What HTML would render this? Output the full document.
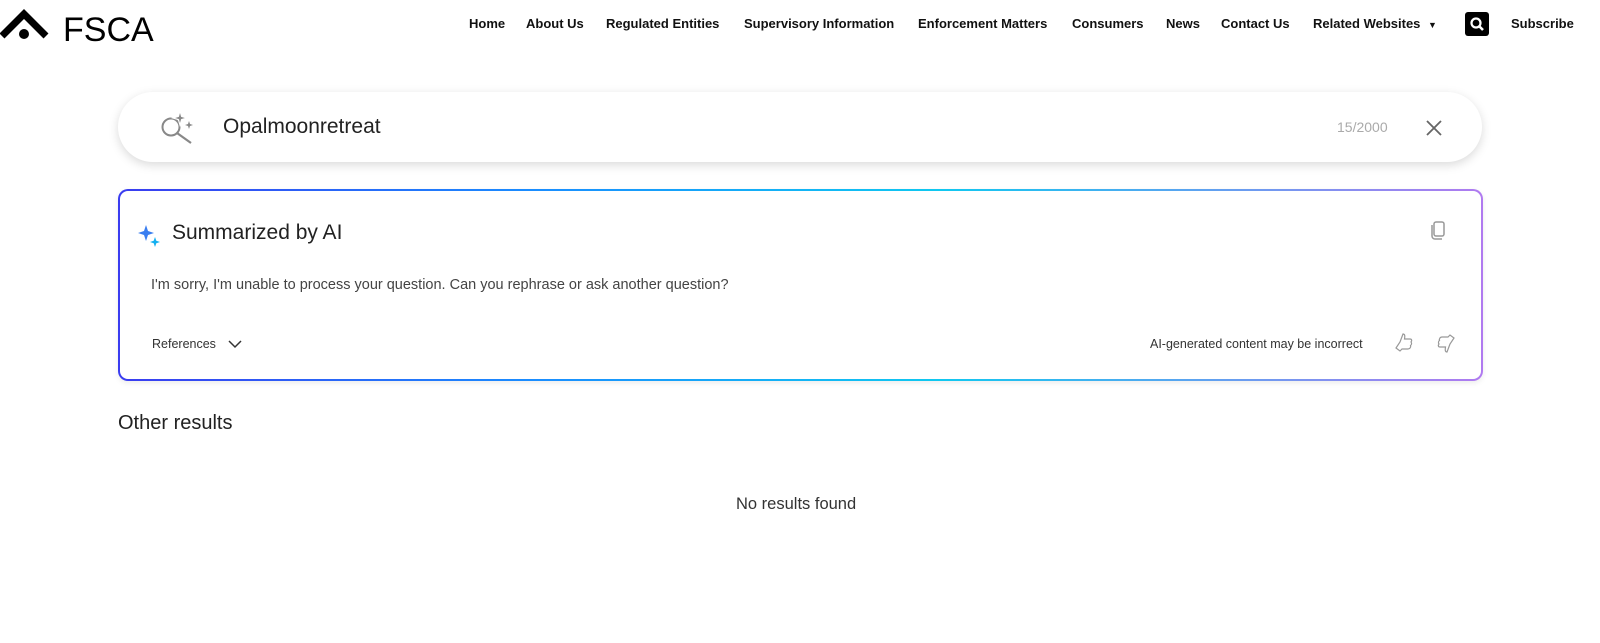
<!DOCTYPE html>
<html><head><meta charset="utf-8"><style>
*{box-sizing:border-box;margin:0;padding:0}
body{width:1600px;height:643px;background:#fff;font-family:"Liberation Sans",sans-serif;position:relative;overflow:hidden;color:#222}
.logo{position:absolute;left:0;top:6px}
.nav{position:absolute;top:16px;left:469px;font-size:13px;font-weight:700;color:#111;white-space:nowrap}
.nav span{position:absolute;top:0}
.sbtn{position:absolute;left:1465px;top:12px;width:24px;height:24px;background:#000;border-radius:3px}
.search{position:absolute;left:118px;top:92px;width:1364px;height:70px;border-radius:35px;background:#fff;box-shadow:0 3px 10px rgba(0,0,0,.15)}
.search .q{position:absolute;left:105px;top:23px;font-size:21px;color:#222}
.search .cnt{position:absolute;left:1219px;top:27px;font-size:14px;color:#aaa}
.card{position:absolute;left:118px;top:189px;width:1365px;height:192px;border-radius:10px;padding:2px;background:linear-gradient(90deg,#3a3cf0 0%,#1a8cff 30%,#10c8f0 60%,#b07af0 100%);box-shadow:0 2px 6px rgba(0,0,0,.08)}
.card .in{width:100%;height:100%;background:#fff;border-radius:8px;position:relative}
.ttl{position:absolute;left:52px;top:30px;font-size:21px;color:#222}
.msg{position:absolute;left:31px;top:86px;font-size:14.5px;color:#444}
.ref{position:absolute;left:32px;top:146px;font-size:12.5px;color:#333}
.dis{position:absolute;left:1030px;top:146px;font-size:12.5px;color:#333}
.other{position:absolute;left:118px;top:412px;font-size:20px;color:#222}
.none{position:absolute;left:736px;top:495px;font-size:16.5px;color:#333}
</style></head><body>
<svg class="logo" width="165" height="38" viewBox="0 0 165 38">
<path d="M2 30 L24 8 L46 30" fill="none" stroke="#000" stroke-width="7"/>
<circle cx="24" cy="28" r="5" fill="#000"/>
<text x="63" y="35" font-family="Liberation Sans" font-size="34" fill="#000">FSCA</text>
</svg>
<div class="nav">
<span style="left:0">Home</span><span style="left:57px">About Us</span><span style="left:137px">Regulated Entities</span><span style="left:275px">Supervisory Information</span><span style="left:449px">Enforcement Matters</span><span style="left:603px">Consumers</span><span style="left:697px">News</span><span style="left:752px">Contact Us</span><span style="left:844px">Related Websites <span style="position:static;font-size:9px;margin-left:4px">▼</span></span><span style="left:1042px">Subscribe</span>
</div>
<div class="sbtn"><svg width="24" height="24"><circle cx="11" cy="11" r="4.5" fill="none" stroke="#fff" stroke-width="2.2"/><path d="M14 14 L18 18" stroke="#fff" stroke-width="2.6"/></svg></div>
<div class="search">
<svg style="position:absolute;left:40px;top:16px" width="40" height="40" viewBox="0 0 40 40"><circle cx="13" cy="19" r="8.5" fill="none" stroke="#888" stroke-width="2"/><path d="M19 25 L33 35" stroke="#888" stroke-width="2.2"/><path d="M22 3 L23.6 8.4 L29 10 L23.6 11.6 L22 17 L20.4 11.6 L15 10 L20.4 8.4Z" fill="#888" stroke="#fff" stroke-width="1.2"/><path d="M31 13 L32 16 L35 17 L32 18 L31 21 L30 18 L27 17 L30 16Z" fill="#888"/></svg>
<div class="q">Opalmoonretreat</div>
<div class="cnt">15/2000</div>
<svg style="position:absolute;left:1306px;top:26px" width="20" height="20"><path d="M3 3L17 17M17 3L3 17" stroke="#666" stroke-width="1.8"/></svg>
</div>
<div class="card"><div class="in">
<svg style="position:absolute;left:17px;top:33px" width="24" height="24" viewBox="0 0 24 24"><path d="M9 1 L11 7 L17 9 L11 11 L9 17 L7 11 L1 9 L7 7Z" fill="#3a7ef0"/><path d="M18 13 L19.3 16.7 L23 18 L19.3 19.3 L18 23 L16.7 19.3 L13 18 L16.7 16.7Z" fill="#14b0f0"/></svg>
<div class="ttl">Summarized by AI</div>
<svg style="position:absolute;left:1307px;top:29px" width="22" height="22"><rect x="7" y="2" width="10" height="14" rx="2" fill="none" stroke="#999" stroke-width="1.5"/><path d="M5 5 V16 a3 3 0 0 0 3 3 H15" fill="none" stroke="#999" stroke-width="1.5"/></svg>
<div class="msg">I'm sorry, I'm unable to process your question. Can you rephrase or ask another question?</div>
<div class="ref">References</div>
<svg style="position:absolute;left:107px;top:147px" width="16" height="12"><path d="M2 3 L8 9 L14 3" fill="none" stroke="#333" stroke-width="1.5"/></svg>
<div class="dis">AI-generated content may be incorrect</div>
<svg style="position:absolute;left:1274px;top:141px" width="20" height="22" viewBox="0 0 20 22"><path d="M6 10 L9 2 C11 2 11 4 10.5 7 H16 C18 7 18 9 17 10 C18 11 17.5 13 16.5 13.5 C17 15 16 17 14 17 H8 L6 19 L2 16 Z" fill="none" stroke="#999" stroke-width="1.2"/></svg>
<svg style="position:absolute;left:1316px;top:141px" width="20" height="22" viewBox="0 0 20 22"><path d="M14 12 L11 20 C9 20 9 18 9.5 15 H4 C2 15 2 13 3 12 C2 11 2.5 9 3.5 8.5 C3 7 4 5 6 5 H12 L14 3 L18 6 Z" fill="none" stroke="#999" stroke-width="1.2"/></svg>
</div></div>
<div class="other">Other results</div>
<div class="none">No results found</div>
</body></html>
